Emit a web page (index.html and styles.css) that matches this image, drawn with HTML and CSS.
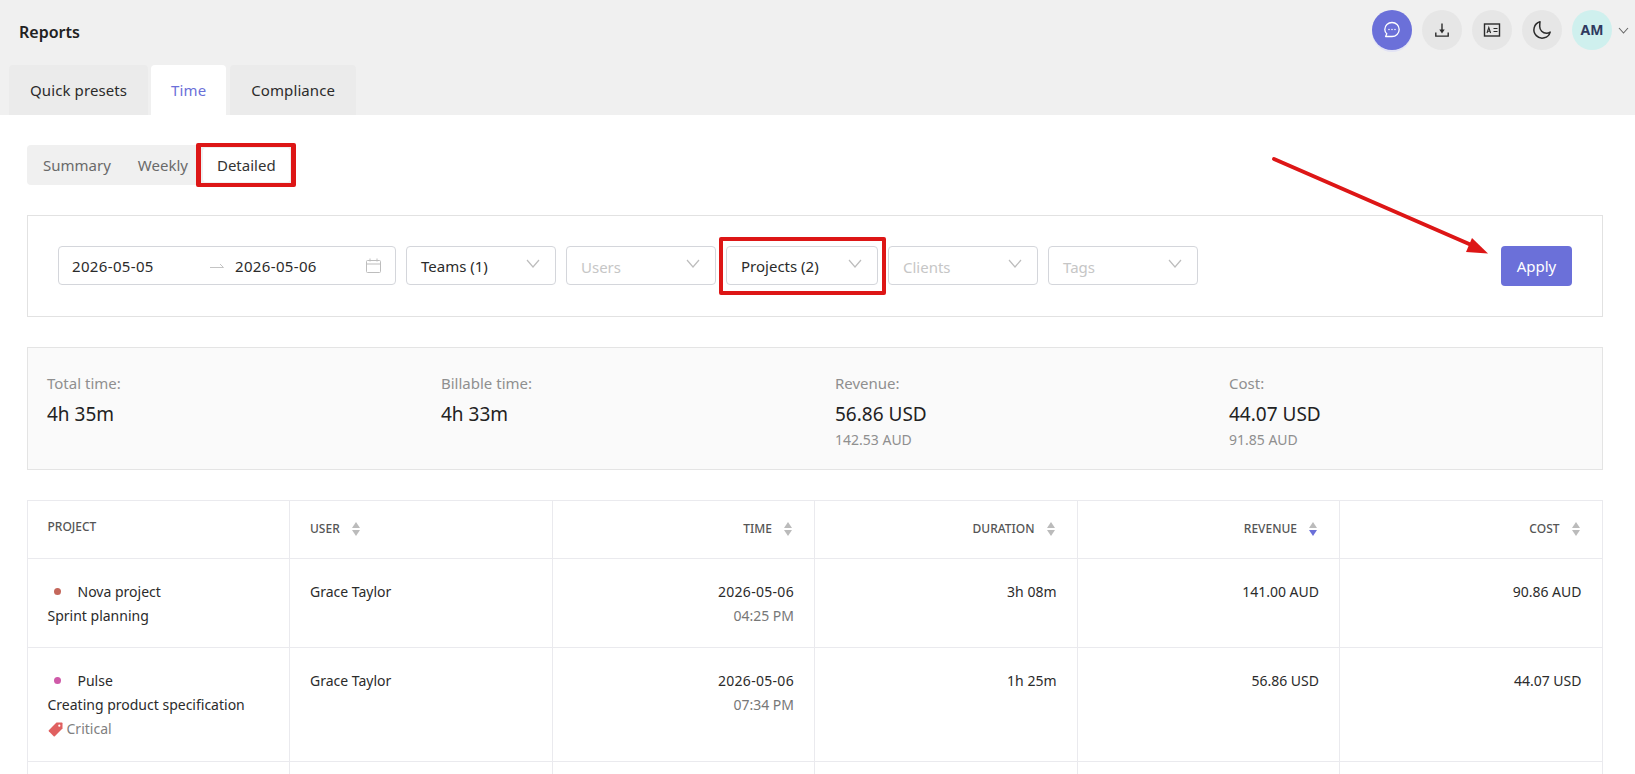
FILE: index.html

```html
<!DOCTYPE html>
<html lang="en">
<head>
    <meta charset="UTF-8">
    <meta name="viewport" content="width=device-width, initial-scale=1.0">
    <title>Reports</title>
    <link rel="stylesheet" href="styles.css">
</head>
<body>
    <div class="app">
        <header class="top">
            <div class="top-row">
                <div class="page-title">Reports</div>
                <div class="top-actions">
                    <div class="round round-primary">
                        <svg width="18" height="18" viewBox="0 0 18 18" fill="none" stroke="#fff" stroke-width="1.3"><path d="M9 1.500c4 0 7.200 3.100 7.200 7s-3.200 7-7.200 7H2.600l1.200-2.700C2.500 11.600 1.800 10.100 1.800 8.500c0-3.900 3.200-7 7.200-7z" stroke-linejoin="round"/><circle cx="6" cy="8.500" r=".75" fill="#fff" stroke="none"/><circle cx="9" cy="8.500" r=".75" fill="#fff" stroke="none"/><circle cx="12" cy="8.500" r=".75" fill="#fff" stroke="none"/></svg>
                    </div>
                    <div class="round">
                        <svg width="18" height="18" viewBox="0 0 18 18" fill="none" stroke="#2b2b2b" stroke-width="1.4"><path d="M9 2.500v8.500"/><path d="M9 12.500 6.300 8.500h5.400z" fill="#2b2b2b" stroke="none"/><path d="M2.800 11.500v3.600h12.400v-3.600"/></svg>
                    </div>
                    <div class="round">
                        <svg width="18" height="18" viewBox="0 0 18 18" fill="none" stroke="#2b2b2b" stroke-width="1.4"><rect x="1.500" y="3" width="15" height="12"/><path d="M4 12l1.800-5.500L7.600 12M4.700 10.300h2.200" stroke-width="1.100"/><path d="M10.500 7.500h4M10.500 10.500h4" stroke-width="1.200"/></svg>
                    </div>
                    <div class="round">
                        <svg width="20" height="20" viewBox="0 0 20 20" fill="none" stroke="#2b2b2b" stroke-width="1.500"><path d="M8 1.800a8.300 8.300 0 1 0 10.200 10.300c-1 .8-2.300 1.200-3.700 1.200-3.800 0-6.800-3-6.800-6.800 0-1.700.1-3.200.3-4.700z" stroke-linejoin="round"/></svg>
                    </div>
                    <div class="round round-avatar">AM</div>
                    <svg class="avatar-caret" width="11" height="7" viewBox="0 0 11 7" fill="none" stroke="#666" stroke-width="1.100"><path d="M1 1l4.500 5L10 1"/></svg>
                </div>
            </div>
            <nav class="tabs">
                <div class="tab">Quick presets</div>
                <div class="tab tab-active">Time</div>
                <div class="tab">Compliance</div>
            </nav>
        </header>

        <main class="content">
            <div class="segment">
                <div class="segment-item">Summary</div>
                <div class="segment-item">Weekly</div>
                <div class="segment-item segment-active">Detailed</div>
            </div>

            <section class="filters">
                <div class="field field-date">
                    <span class="date-from">2026-05-05</span>
                    <svg class="date-arrow" width="14" height="6" viewBox="0 0 14 6" fill="none" stroke="#c4c4c4"><path d="M0 4.500h13.500L10 1"/></svg>
                    <span class="date-to">2026-05-06</span>
                    <svg class="date-icon" width="15" height="15" viewBox="0 0 15 15" fill="none" stroke="#bdbdbd"><rect x=".5" y="2.500" width="14" height="12" rx="1"/><path d="M.5 6h14M4 .5v3M11 .5v3"/></svg>
                </div>
                <div class="field field-select"><span>Teams (1)</span><svg class="chev" width="14" height="9" viewBox="0 0 14 9" fill="none" stroke="#bdbdbd" stroke-width="1.200"><path d="M1 1l6 7 6-7"/></svg></div>
                <div class="field field-select field-empty"><span>Users</span><svg class="chev" width="14" height="9" viewBox="0 0 14 9" fill="none" stroke="#bdbdbd" stroke-width="1.200"><path d="M1 1l6 7 6-7"/></svg></div>
                <div class="field field-select field-wide"><span>Projects (2)</span><svg class="chev" width="14" height="9" viewBox="0 0 14 9" fill="none" stroke="#bdbdbd" stroke-width="1.200"><path d="M1 1l6 7 6-7"/></svg></div>
                <div class="field field-select field-empty"><span>Clients</span><svg class="chev" width="14" height="9" viewBox="0 0 14 9" fill="none" stroke="#bdbdbd" stroke-width="1.200"><path d="M1 1l6 7 6-7"/></svg></div>
                <div class="field field-select field-empty"><span>Tags</span><svg class="chev" width="14" height="9" viewBox="0 0 14 9" fill="none" stroke="#bdbdbd" stroke-width="1.200"><path d="M1 1l6 7 6-7"/></svg></div>
                <button class="apply">Apply</button>
            </section>

            <section class="stats">
                <div class="stat">
                    <div class="stat-label">Total time:</div>
                    <div class="stat-value">4h 35m</div>
                </div>
                <div class="stat">
                    <div class="stat-label">Billable time:</div>
                    <div class="stat-value">4h 33m</div>
                </div>
                <div class="stat">
                    <div class="stat-label">Revenue:</div>
                    <div class="stat-value">56.86 USD</div>
                    <div class="stat-sub">142.53 AUD</div>
                </div>
                <div class="stat">
                    <div class="stat-label">Cost:</div>
                    <div class="stat-value">44.07 USD</div>
                    <div class="stat-sub">91.85 AUD</div>
                </div>
            </section>

            <table class="report">
                <thead>
                    <tr>
                        <th class="th-project">PROJECT</th>
                        <th><span class="th-inner">USER<span class="sort"></span></span></th>
                        <th class="right"><span class="th-inner">TIME<span class="sort"></span></span></th>
                        <th class="right"><span class="th-inner">DURATION<span class="sort"></span></span></th>
                        <th class="right"><span class="th-inner">REVENUE<span class="sort sort-down"></span></span></th>
                        <th class="right"><span class="th-inner">COST<span class="sort"></span></span></th>
                    </tr>
                </thead>
                <tbody>
                    <tr>
                        <td>
                            <div class="project"><span class="dot dot-nova"></span>Nova project</div>
                            <div>Sprint planning</div>
                        </td>
                        <td>Grace Taylor</td>
                        <td class="right"><span class="day">2026-05-06</span><div class="muted">04:25 PM</div></td>
                        <td class="right">3h 08m</td>
                        <td class="right">141.00 AUD</td>
                        <td class="right">90.86 AUD</td>
                    </tr>
                    <tr>
                        <td>
                            <div class="project"><span class="dot dot-pulse"></span>Pulse</div>
                            <div>Creating product specification</div>
                            <div class="tag">
                                <svg width="15" height="15" viewBox="0 0 15 15"><path d="M8.500.5h5.200a.8.800 0 0 1 .8.800v5.200L6.800 14.200a.8.800 0 0 1-1.100 0L.8 9.300a.8.800 0 0 1 0-1.100z" fill="#e06060"/><circle cx="11.300" cy="3.700" r="1.100" fill="#fff"/></svg>
                                Critical
                            </div>
                        </td>
                        <td>Grace Taylor</td>
                        <td class="right"><span class="day">2026-05-06</span><div class="muted">07:34 PM</div></td>
                        <td class="right">1h 25m</td>
                        <td class="right">56.86 USD</td>
                        <td class="right">44.07 USD</td>
                    </tr>
                    <tr class="row-next">
                        <td></td><td></td><td></td><td></td><td></td><td></td>
                    </tr>
                </tbody>
            </table>
        </main>

        <!-- annotations drawn over the page -->
        <div class="mark mark-detailed"></div>
        <div class="mark mark-projects"></div>
        <svg class="mark-arrow" width="1635" height="774" viewBox="0 0 1635 774" fill="none">
            <path d="M1274 159L1476 247" stroke="#dd1616" stroke-width="4" stroke-linecap="round"/>
            <path d="M1488 253.500L1472 238L1466 252z" fill="#dd1616"/>
        </svg>
    </div>
</body>
</html>
```

FILE: styles.css

```css
html, body {
    margin: 0;
    padding: 0;
    height: 100%;
    overflow: hidden;
}
body {
    font-family: "Noto Sans", Roboto, sans-serif;
    font-size: 14px;
    line-height: 24px;
    color: #2b2b2b;
    background: #fff;
}
.app {
    position: relative;
    height: 774px;
    overflow: hidden;
}

/* header */
.top {
    height: 115px;
    background: #f0f0f0;
    padding-left: 9px;
    box-sizing: border-box;
}
.top-row {
    height: 65px;
    display: flex;
    justify-content: space-between;
    padding-top: 10px;
    box-sizing: border-box;
}
.page-title {
    font-size: 16px;
    font-weight: 600;
    line-height: 44px;
    padding-left: 10px;
    color: #222;
}
.top-actions {
    display: flex;
    align-items: flex-start;
    gap: 10px;
    padding-right: 6px;
}
.round {
    width: 40px;
    height: 40px;
    border-radius: 50%;
    background: #e6e6e6;
    display: flex;
    align-items: center;
    justify-content: center;
}
.round-primary {
    background: #6b70d9;
    box-shadow: 0 2px 0 #e2e3f4;
}
.round-avatar {
    background: #cff0ee;
    color: #2f3a5f;
    font-weight: 700;
    font-size: 14px;
}
.avatar-caret {
    margin: 17px 0 0 -4px;
}
.tabs {
    display: flex;
    gap: 3px;
}
.tab {
    height: 50px;
    line-height: 50px;
    padding: 0 21px;
    background: #ebebeb;
    border-radius: 4px 4px 0 0;
    font-size: 15px;
    letter-spacing: .1px;
    color: #2b2b2b;
}
.tab-active {
    background: #fff;
    color: #6b70d9;
    padding: 0 20px;
    margin-right: 1px;
}

/* main */
.content {
    padding: 30px 32px 0 27px;
}
.segment {
    display: inline-flex;
    vertical-align: top;
    height: 40px;
    padding: 3px 3px 3px 16px;
    box-sizing: border-box;
    background: #f0f0f0;
    border-radius: 4px;
    color: #6a6a6a;
    font-size: 15px;
}
.segment-item {
    line-height: 34px;
    margin-right: 27px;
}
.segment-item:nth-child(2) {
    margin-right: 15px;
}
.segment-active {
    margin-right: 0;
    padding: 0 14px;
    background: #fff;
    border-radius: 3px;
    color: #333;
}

.filters {
    margin-top: 30px;
    height: 102px;
    box-sizing: border-box;
    border: 1px solid #e2e2e2;
    padding: 30px;
    display: flex;
    gap: 10px;
    align-items: flex-start;
    font-size: 15px;
}
.field {
    height: 39px;
    box-sizing: border-box;
    border: 1px solid #d4d6db;
    border-radius: 4px;
    display: flex;
    align-items: center;
    background: #fff;
}
.field-date {
    width: 338px;
    padding: 0 14px 0 13px;
}
.date-from, .date-to {
    letter-spacing: .35px;
}
.date-from {
    width: 138px;
}
.date-arrow {
    margin-right: 11px;
}
.date-to {
    flex: 1;
}
.field-select {
    width: 150px;
    padding: 0 15px 0 14px;
    justify-content: space-between;
}
.field-wide {
    width: 152px;
}
.field-empty {
    color: #c6c6c6;
}
.field-empty span {
    position: relative;
    top: 1px;
}
.chev {
    margin-top: -4px;
}
.apply {
    margin-left: auto;
    width: 71px;
    height: 40px;
    border: 0;
    border-radius: 4px;
    background: #6b70d9;
    color: #fff;
    font: inherit;
    font-size: 15px;
}

.stats {
    margin-top: 30px;
    height: 123px;
    box-sizing: border-box;
    border: 1px solid #e4e4e4;
    background: #fafafa;
    padding: 23px 19px 0;
    display: grid;
    grid-template-columns: repeat(4, 1fr);
    column-gap: 40px;
}
.stat-label {
    font-size: 15px;
    color: #8f8f8f;
}
.stat-value {
    font-size: 19px;
    line-height: 24px;
    margin-top: 7px;
    color: #222;
}
.stat-sub {
    color: #8f8f8f;
    margin-top: 2px;
}

/* table */
.report {
    margin: 30px 0 0 -.5px;
    width: 100%;
    table-layout: fixed;
    border-collapse: collapse;
}
.report th, .report td {
    border: 1px solid #eaeaee;
    padding: 21px 20px 19px;
    text-align: left;
    vertical-align: top;
    font-weight: 400;
}
.report th {
    height: 58px;
    box-sizing: border-box;
    padding-top: 0;
    padding-bottom: 1px;
    vertical-align: middle;
    font-size: 12px;
    font-weight: 500;
    color: #555;
}
.report .right {
    text-align: right;
}
.report .th-project {
    padding-bottom: 5px;
}
.th-inner {
    display: inline-flex;
    align-items: center;
    gap: 12px;
}
.right .th-inner {
    margin-right: 1px;
}
.sort {
    display: inline-block;
    width: 9px;
    height: 14px;
    position: relative;
}
.sort::before, .sort::after {
    content: "";
    position: absolute;
    left: 0;
    border-left: 4.500px solid transparent;
    border-right: 4.500px solid transparent;
}
.sort::before {
    top: 0;
    border-bottom: 6px solid #bbb;
}
.sort::after {
    bottom: 0;
    border-top: 6px solid #bbb;
}
.sort-down::after {
    border-top-color: #6b70d9;
}
.project {
    display: flex;
    align-items: center;
}
.dot {
    width: 7px;
    height: 7px;
    border-radius: 50%;
    margin: -2px 17px 0 6px;
}
.dot-nova {
    background: #c4675b;
}
.dot-pulse {
    background: #cf5aa8;
}
.tag {
    display: flex;
    align-items: center;
    gap: 4px;
    margin-bottom: 1px;
    color: #808080;
}
.day {
    letter-spacing: .3px;
}
.muted {
    color: #777;
}
.row-next td {
    height: 60px;
}

/* red annotations */
.mark {
    position: absolute;
    box-sizing: border-box;
    border-style: solid;
    border-color: #dd1616;
    border-radius: 2px;
}
.mark-detailed {
    left: 196px;
    top: 143px;
    width: 100px;
    height: 44px;
    border-width: 4px 5px;
}
.mark-projects {
    left: 719px;
    top: 237px;
    width: 167px;
    height: 58px;
    border-width: 4px;
}
.mark-arrow {
    position: absolute;
    left: 0;
    top: 0;
    pointer-events: none;
}
```
